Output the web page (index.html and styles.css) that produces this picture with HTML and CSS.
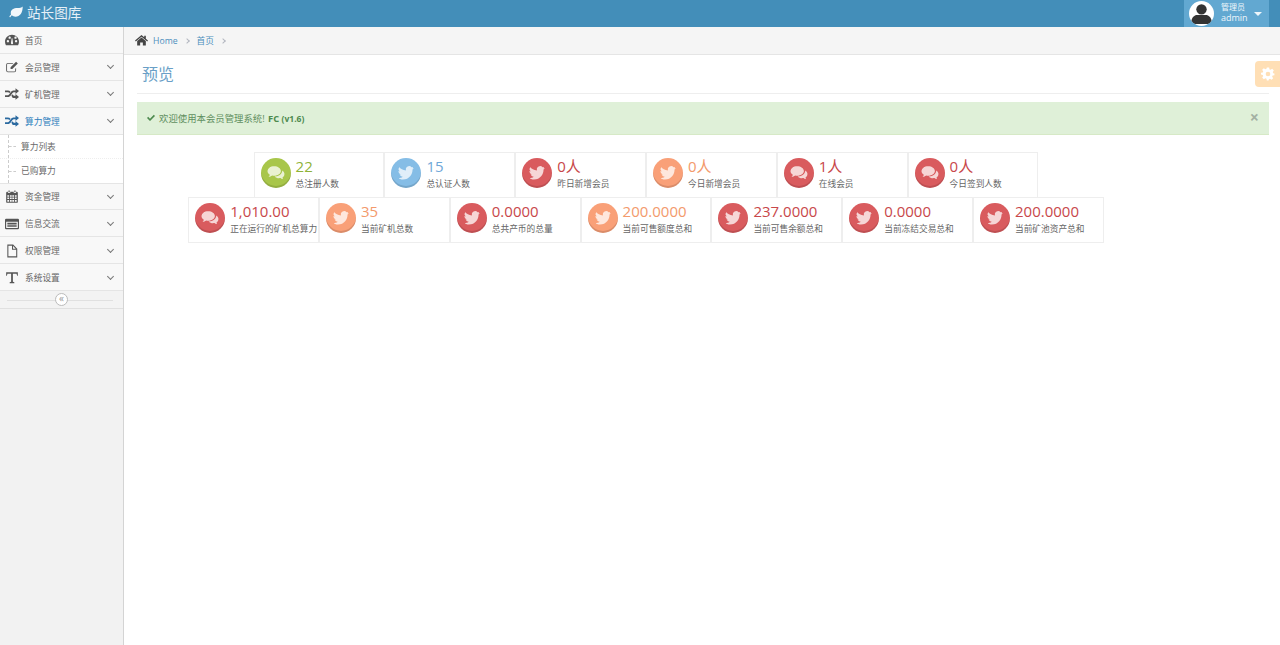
FILE: index.html
```html
<!DOCTYPE html>
<html lang="zh">
<head>
<meta charset="utf-8">
<title>站长图库</title>
<link rel="stylesheet" href="styles.css">
</head>
<body>
<svg class="defs" width="0" height="0" aria-hidden="true">
  <symbol id="i-comments" viewBox="0 0 24 24"><path d="M9.500 3C4.500 3 .5 5.800.5 9.300c0 2 1.300 3.800 3.300 5-.3 1.200-.9 2.200-1.800 3.100 1.900-.3 3.500-1 4.900-2.100.9.200 1.700.3 2.600.3 5 0 9-2.800 9-6.300S14.500 3 9.500 3z"/><path d="M20.300 8.500c.3 3.700-3.600 7.800-10.100 8.100 1.400 1.500 3.500 2.400 5.800 2.400.7 0 1.300-.1 2-.2 1.200 1 2.500 1.600 4.200 1.800-.8-.8-1.300-1.700-1.500-2.700 1.700-1.100 2.700-2.700 2.700-4.400 0-2-1.100-3.700-3.100-5z"/></symbol>
  <symbol id="i-twitter" viewBox="0 0 24 24"><path d="M23 5.100c-.8.400-1.700.6-2.600.7.900-.6 1.600-1.400 2-2.500-.9.500-1.800.9-2.900 1.100A4.500 4.500 0 0 0 11.800 8.500C8 8.300 4.700 6.500 2.500 3.700c-1.200 2.100-.6 4.800 1.400 6.100-.7 0-1.400-.2-2-.6 0 2.200 1.500 4.100 3.600 4.500-.7.200-1.400.2-2 .1.600 1.800 2.300 3.100 4.200 3.100-1.900 1.500-4.200 2.100-6.700 1.900 2 1.300 4.300 2 6.900 2 8.400 0 13.100-7.100 12.800-13.400.9-.7 1.700-1.500 2.300-2.400z"/></symbol>
  <symbol id="i-dash" viewBox="0 0 24 24"><path fill-rule="evenodd" d="M12 3C5.400 3 0 8.300 0 15c0 2.200.6 4.200 1.600 6h20.800c1-1.800 1.600-3.800 1.600-6 0-6.700-5.400-12-12-12zM5 16a2 2 0 1 1 0-4 2 2 0 0 1 0 4zm3-6a2 2 0 1 1 0-4 2 2 0 0 1 0 4zm6 8a2 2 0 0 1-3.800-1L11.500 9h1.200l1 8c.2.300.3.600.3 1zm2-10a2 2 0 1 1 4 0 2 2 0 0 1-4 0zm3 8a2 2 0 1 1 0-4 2 2 0 0 1 0 4z"/></symbol>
  <symbol id="i-edit" viewBox="0 0 24 24"><path d="M19 13.500V18a3 3 0 0 1-3 3H5a3 3 0 0 1-3-3V8a3 3 0 0 1 3-3h9.500l-1.500 1.500H5A1.500 1.500 0 0 0 3.500 8v10A1.500 1.500 0 0 0 5 19.500h11a1.500 1.500 0 0 0 1.500-1.500v-3z"/><path d="M9.500 12.500 19 3l3 3-9.500 9.500h-3z"/></symbol>
  <symbol id="i-random" viewBox="0 0 24 24"><path d="M18 2l6 5-6 5V9h-2.600c-1.200 0-2 .6-2.900 1.800L9.800 14.500C8.500 16.300 7 17 5 17H0v-3h4.600c1.100 0 1.900-.6 2.700-1.700l2.800-3.800C11.500 7 13 6 15.200 6H18z"/><path d="M0 6h5c1.900 0 3.400.7 4.500 2.100L8 10.400C7 9.400 6 9 4.800 9H0zM11 14.400l1.700-2c.8 1 1.700 2.600 3 2.600H18v-3l6 5-6 5v-3h-2.600c-1.900 0-3.300-1-4.400-4.600z"/></symbol>
  <symbol id="i-cal" viewBox="0 0 24 24"><path d="M6 1h2v3H6zM16 1h2v3h-2z"/><path fill-rule="evenodd" d="M4 3h1v2h4V3h6v2h4V3h1a2 2 0 0 1 2 2v15a2 2 0 0 1-2 2H4a2 2 0 0 1-2-2V5a2 2 0 0 1 2-2zM4 9v2.500h3V9zm4.500 0v2.500h3V9zm4 0v2.500h3V9zm4.500 0v2.500h3V9zM4 13v2.500h3V13zm4.500 0v2.500h3V13zm4 0v2.500h3V13zm4.500 0v2.500h3V13zM4 17v3h3v-3zm4.500 0v3h3v-3zm4 0v3h3v-3zm4.500 0v3h3v-3z"/></symbol>
  <symbol id="i-list" viewBox="0 0 24 24"><path fill-rule="evenodd" d="M2 3h20a2 2 0 0 1 2 2v14a2 2 0 0 1-2 2H2a2 2 0 0 1-2-2V5a2 2 0 0 1 2-2zm0 5v10.500c0 .3.200.5.500.5h19c.3 0 .5-.2.500-.5V8zm2 2h16v1.800H4zm0 3h16v1.800H4zm0 3h16v1H4z"/></symbol>
  <symbol id="i-file" viewBox="0 0 24 24"><path fill-rule="evenodd" d="M4 1h10l7 7v15H4zm1.800 1.800v18.400h13.400V10H12V2.800zm8 .8V8.200h4.600z"/></symbol>
  <symbol id="i-text" viewBox="0 0 24 24"><path d="M2 2h20v6h-1.200l-1-3.500H13.500v14l2.500.8V21H8v-1.700l2.500-.8V4.500H4.200L3.200 8H2z"/></symbol>
  <symbol id="i-home" viewBox="0 0 24 24"><path d="M12 6.500 4 13v8h5.500v-5.500h5V21H20v-8z"/><path d="M12 2 0 12l1.500 1.800L12 5l10.500 8.800L24 12l-4-3.400V3h-3v3z"/></symbol>
  <symbol id="i-leaf" viewBox="0 0 24 24"><path d="M23.500 2.500c-2 2-5 2.500-9 2.500C8 5 3 8 3 13.500c0 1 .2 1.900.5 2.700C1.800 17.500.7 19 .5 20.500l1.800.7c.4-1.300 1.300-2.500 2.500-3.500C6.300 19.300 8.600 20 11 20c8 0 12.500-7 12.500-17.500zM6 16c3-2.500 7-4 11-5-4.500.4-8.500 1.700-12 3.700z"/></symbol>
  <symbol id="i-gear" viewBox="0 0 24 24"><path fill-rule="evenodd" d="M10 1h4l.6 3.100 1.900.8 2.700-1.800 2.800 2.800-1.800 2.700.8 1.900L23 11v3l-3.100.6-.8 1.900 1.800 2.700-2.800 2.800-2.700-1.800-1.900.8L13 23h-3l-.6-3-1.900-.8-2.700 1.800L2 18.200l1.800-2.700-.8-1.900L0 13v-3l3-.6.800-1.900L2 4.800 4.800 2l2.700 1.800 1.900-.8zM12 8a4 4 0 1 0 0 8 4 4 0 0 0 0-8z"/></symbol>
  <symbol id="i-check" viewBox="0 0 24 24"><path d="M9 21 0 12l3.500-3.500L9 14 20.500 2.500 24 6z"/></symbol>
</svg>

<header class="navbar">
  <div class="brand"><svg class="brand-icon"><use href="#i-leaf"/></svg><span>站长图库</span></div>
  <div class="user">
    <span class="avatar"><svg viewBox="0 0 24 24"><circle cx="12" cy="8" r="5"/><path d="M2 22c0-6 3-8.500 6-8.500h8c3 0 6 2.500 6 8.500z"/></svg></span>
    <span class="user-text"><small>管理员</small><b>admin</b></span>
    <span class="caret"></span>
  </div>
</header>

<div class="layout">
  <nav class="sidebar">
    <a class="item"><svg class="ico"><use href="#i-dash"/></svg><span>首页</span></a>
    <a class="item"><svg class="ico"><use href="#i-edit"/></svg><span>会员管理</span><i class="chev"></i></a>
    <a class="item"><svg class="ico"><use href="#i-random"/></svg><span>矿机管理</span><i class="chev"></i></a>
    <a class="item active"><svg class="ico"><use href="#i-random"/></svg><span>算力管理</span><i class="chev"></i></a>
    <div class="submenu">
      <a class="sub">算力列表</a>
      <a class="sub">已购算力</a>
    </div>
    <a class="item"><svg class="ico"><use href="#i-cal"/></svg><span>资金管理</span><i class="chev"></i></a>
    <a class="item"><svg class="ico"><use href="#i-list"/></svg><span>信息交流</span><i class="chev"></i></a>
    <a class="item"><svg class="ico"><use href="#i-file"/></svg><span>权限管理</span><i class="chev"></i></a>
    <a class="item"><svg class="ico"><use href="#i-text"/></svg><span>系统设置</span><i class="chev"></i></a>
    <div class="collapse"><span class="collapse-btn">«</span></div>
  </nav>

  <main class="main">
    <div class="crumbs">
      <svg class="home"><use href="#i-home"/></svg>
      <a>Home</a><i class="sep"></i><a>首页</a><i class="sep"></i>
    </div>
    <div class="settings"><svg><use href="#i-gear"/></svg></div>
    <div class="content">
      <div class="page-header"><h1>预览</h1></div>
      <div class="alert">
        <svg class="check"><use href="#i-check"/></svg>
        <span>欢迎使用本会员管理系统! <b>FC <small>(v1.6)</small></b></span>
        <span class="close">×</span>
      </div>
      <div class="stats">
        <div class="stat-row">
          <div class="stat green"><svg class="badge"><use href="#i-comments"/></svg><div><strong>22</strong><p>总注册人数</p></div></div>
          <div class="stat blue"><svg class="badge"><use href="#i-twitter"/></svg><div><strong>15</strong><p>总认证人数</p></div></div>
          <div class="stat red"><svg class="badge"><use href="#i-twitter"/></svg><div><strong>0人</strong><p>昨日新增会员</p></div></div>
          <div class="stat orange"><svg class="badge"><use href="#i-twitter"/></svg><div><strong>0人</strong><p>今日新增会员</p></div></div>
          <div class="stat red"><svg class="badge"><use href="#i-comments"/></svg><div><strong>1人</strong><p>在线会员</p></div></div>
          <div class="stat red"><svg class="badge"><use href="#i-comments"/></svg><div><strong>0人</strong><p>今日签到人数</p></div></div>
        </div>
        <div class="stat-row">
          <div class="stat red"><svg class="badge"><use href="#i-comments"/></svg><div><strong>1,010.00</strong><p>正在运行的矿机总算力</p></div></div>
          <div class="stat orange"><svg class="badge"><use href="#i-twitter"/></svg><div><strong>35</strong><p>当前矿机总数</p></div></div>
          <div class="stat red"><svg class="badge"><use href="#i-twitter"/></svg><div><strong>0.0000</strong><p>总共产币的总量</p></div></div>
          <div class="stat orange"><svg class="badge"><use href="#i-twitter"/></svg><div><strong>200.0000</strong><p>当前可售额度总和</p></div></div>
          <div class="stat red"><svg class="badge"><use href="#i-twitter"/></svg><div><strong>237.0000</strong><p>当前可售余额总和</p></div></div>
          <div class="stat red"><svg class="badge"><use href="#i-twitter"/></svg><div><strong>0.0000</strong><p>当前冻结交易总和</p></div></div>
          <div class="stat red"><svg class="badge"><use href="#i-twitter"/></svg><div><strong>200.0000</strong><p>当前矿池资产总和</p></div></div>
        </div>
      </div>
    </div>
  </main>
</div>
</body>
</html>
```
FILE: styles.css
```css
* { box-sizing: border-box; }
html, body { margin: 0; height: 100%; overflow: hidden; }
body {
  font-family: "Open Sans", "Noto Sans CJK SC", sans-serif;
  font-size: 8.7px;
  color: #393939;
  background: #fff;
  display: flex;
  flex-direction: column;
}
.defs { position: absolute; }

.navbar {
  height: 27px;
  flex: none;
  background: #438eb9;
  display: flex;
  justify-content: space-between;
  color: #fff;
  padding-right: 11px;
}
.brand { display: flex; align-items: center; padding: 0 0 3px 9px; gap: 4px; font-size: 13.6px; color: #e6f0f7; }
.brand-icon { width: 14px; height: 14px; fill: #f2f7fb; }
.user {
  width: 85px;
  background: #62a8d1;
  display: flex;
  align-items: center;
  padding-left: 5px;
}
.avatar {
  width: 25px; height: 25px;
  border-radius: 50%;
  background: #fff;
  overflow: hidden;
  flex: none;
}
.avatar svg { display: block; width: 25px; height: 25px; fill: #333; }
.user-text { display: flex; flex-direction: column; margin: -3px 0 0 7px; line-height: 11px; width: 33px; color: #eef6fb; }
.user-text small { font-size: 8px; }
.user-text b { font-size: 9px; font-weight: 400; }
.caret { border: 4px solid transparent; border-top-color: #eef6fb; border-bottom-width: 0; }

.layout { flex: 1; display: flex; min-height: 0; }

.sidebar {
  width: 124px;
  flex: none;
  background: #f2f2f2;
  border-right: 1px solid #d4d4d4;
}
.item {
  height: 26.9px;
  display: flex;
  align-items: center;
  background: #f8f8f8;
  border-bottom: 1px solid #e5e5e5;
  color: #666;
  padding: 1px 0 0 5px;
}
.item span { flex: 1; margin-left: 6px; }
.ico { width: 14px; height: 14px; fill: #555; flex: none; }
.chev {
  width: 5px; height: 5px;
  margin: -3px 10px 0 0;
  border-right: 1.3px solid #777;
  border-bottom: 1.3px solid #777;
  transform: rotate(45deg);
}
.active span { color: #2b7dbc; }
.active .ico { fill: #2b6aa0; }
.submenu { background: #fff; border-bottom: 1px solid #e5e5e5; position: relative; }
.submenu::before {
  content: "";
  position: absolute;
  left: 8px; top: 0; bottom: 0;
  border-left: 1px dashed #ccc;
}
.sub {
  display: flex;
  align-items: center;
  height: 24.7px;
  padding-left: 21px;
  color: #6a6a6a;
  border-bottom: 1px dotted #eee;
  position: relative;
}
.sub:last-child { border-bottom: 0; height: 23.3px; }
.sub::before {
  content: "";
  position: absolute;
  left: 9px; top: 50%;
  width: 7px;
  border-top: 1px dashed #ccc;
}
.collapse {
  height: 18px;
  background: #f3f3f3;
  border-bottom: 1px solid #e0e0e0;
  display: flex;
  align-items: center;
  justify-content: center;
  position: relative;
}
.collapse::before {
  content: "";
  position: absolute;
  left: 7px; right: 10px; top: 50%;
  border-top: 1px solid #e0e0e0;
}
.collapse-btn {
  width: 13px; height: 13px;
  border-radius: 50%;
  background: #fff;
  border: 1px solid #bbb;
  color: #999;
  font-size: 10px;
  line-height: 9px;
  text-align: center;
  position: relative;
}

.main { flex: 1; min-width: 0; position: relative; }
.crumbs {
  height: 28px;
  background: #f5f5f5;
  border-bottom: 1px solid #e5e5e5;
  display: flex;
  align-items: center;
  padding-left: 11px;
  font-size: 8.7px;
  color: #4c8fbd;
}
.home { width: 13px; height: 13px; fill: #444; margin-right: 5px; }
.sep {
  width: 4px; height: 4px;
  margin: 0 8px 0 7px;
  border-top: 1px solid #b2b6bf;
  border-right: 1px solid #b2b6bf;
  transform: rotate(45deg);
}
.settings {
  position: absolute;
  right: 0; top: 34px;
  width: 25px; height: 26px;
  background: #ffdfb5;
  border-radius: 4px 0 0 4px;
  display: flex;
  align-items: center;
  justify-content: center;
}
.settings svg { width: 14px; height: 14px; fill: #fff; }
.content { padding: 0 11px 0 13px; }
.page-header { height: 39px; border-bottom: 1px solid #eee; padding: 0 0 2px 5px; display: flex; align-items: center; }
.page-header h1 { margin: 0; font-size: 16px; font-weight: 400; color: #6a9fc7; }
.alert {
  margin-top: 8px;
  height: 33px;
  background: #dff0d8;
  border-bottom: 1px solid #d6e9c6;
  color: #5f8f5f;
  font-size: 9.4px;
  display: flex;
  align-items: center;
  padding: 0 10px;
  gap: 4px;
}
.alert b { font-weight: 700; margin-left: 1px; color: #4d8a4e; }
.alert small { font-size: 8.5px; }
.check { width: 8px; height: 8px; fill: #4d8a4e; }
.close { margin-left: auto; color: #a3b0a3; font-size: 16px; font-weight: 700; margin-top: -2px; }

.stats { margin-top: 17px; padding-right: 114px; display: flex; flex-direction: column; align-items: center; }
.stat-row { display: flex; }
.stat-row + .stat-row { margin-top: -1px; }
.stat {
  width: 130.8px;
  height: 46px;
  border: 1px solid #eee;
  display: flex;
  align-items: flex-start;
  padding: 5px 0 0 6px;
  gap: 5px;
}
.stat strong { display: block; font-size: 15px; font-weight: 400; line-height: 18px; margin-top: -1px; }
.stat p { margin: 3px 0 0; color: #666; font-size: 8.7px; line-height: 12px; white-space: nowrap; }
.badge {
  width: 30px; height: 30px;
  border-radius: 50%;
  padding: 6px;
  fill: #fff;
  flex: none;
  fill-opacity: .75;
  box-shadow: inset 0 -2px 0 rgba(0,0,0,.12);
}
.green .badge { background: #a8c64a; } .green strong { color: #8fb339; }
.blue .badge { background: #85bde6; } .blue strong { color: #6fa8d8; }
.red .badge { background: #d95b5e; } .red strong { color: #c8474a; }
.orange .badge { background: #f9a078; } .orange strong { color: #f39a6c; }
```
